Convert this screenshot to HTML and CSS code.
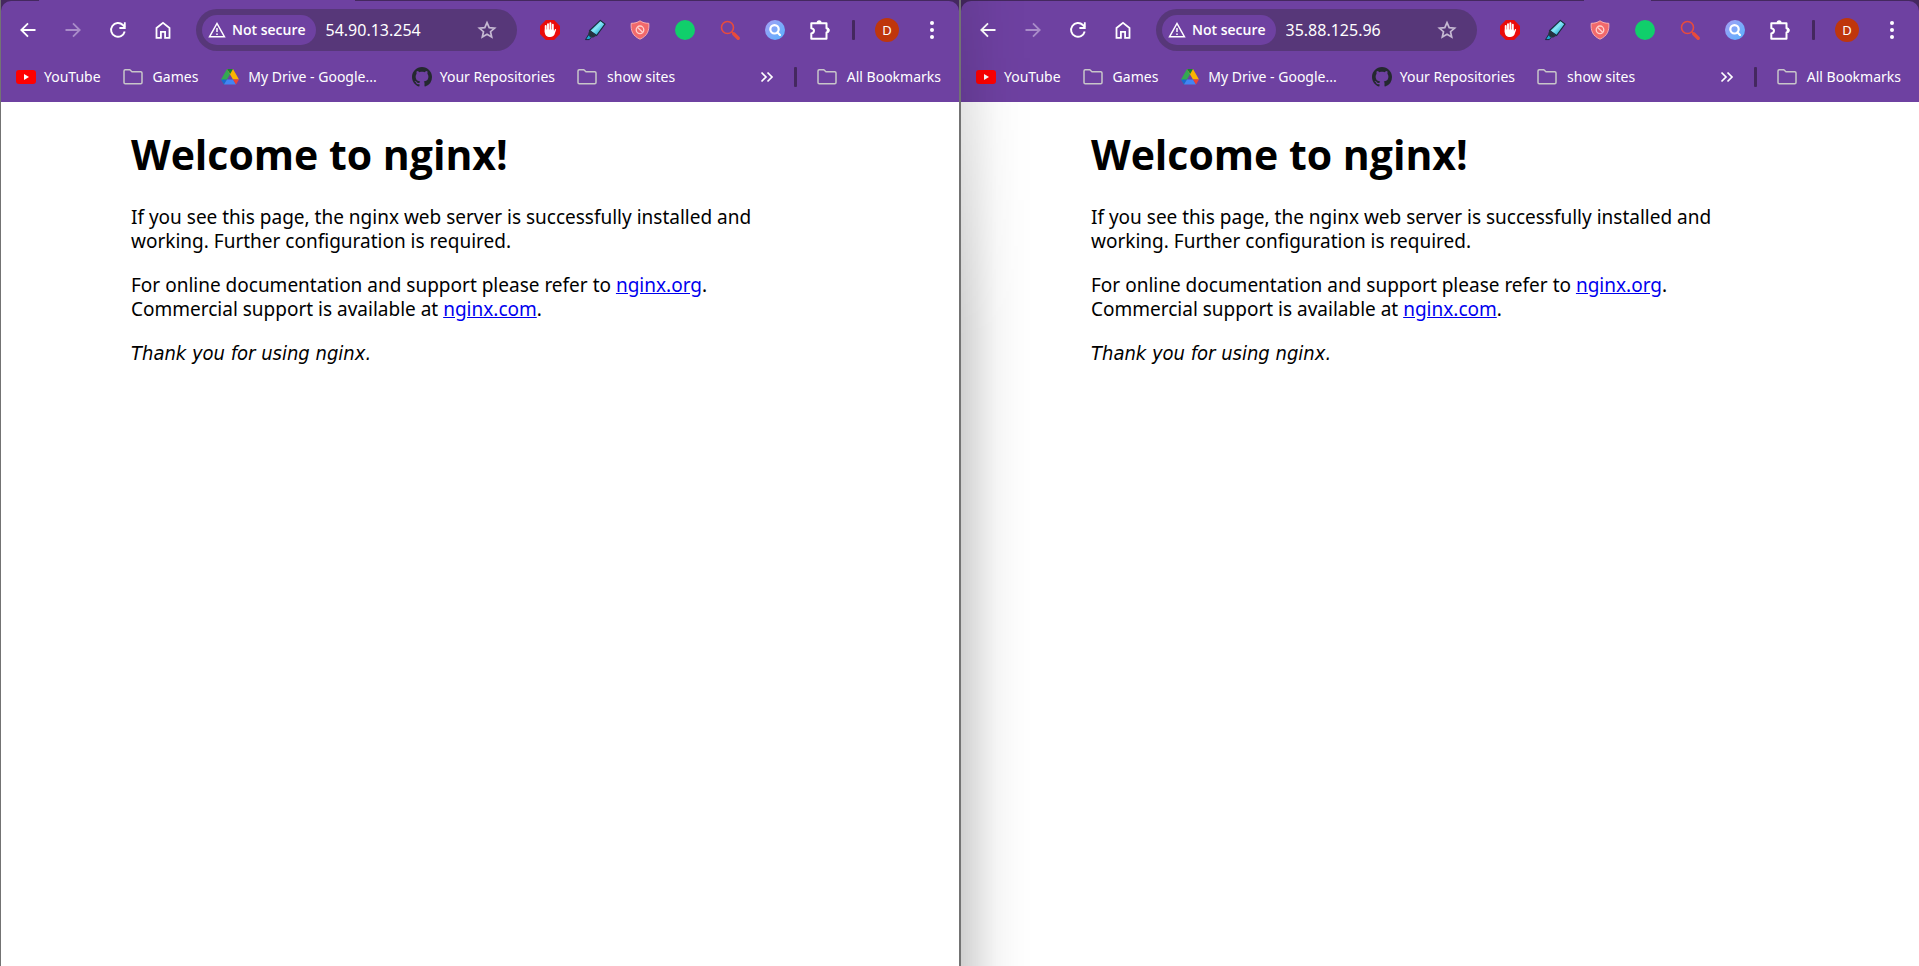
FILE: index.html
```html
<!DOCTYPE html>
<html lang="en">
<head>
<meta charset="utf-8">
<title>Welcome to nginx!</title>
<link rel="stylesheet" href="styles.css">
</head>
<body>
<svg class="sprite" aria-hidden="true">
  <symbol id="back" viewBox="0 0 20 20"><path d="M17.500 10H4M10 3.300 3.300 10l6.700 6.700" fill="none" stroke="currentColor" stroke-width="1.800"/></symbol>
  <symbol id="forward" viewBox="0 0 20 20"><path d="M2.500 10H16M10 3.300l6.700 6.700L10 16.700" fill="none" stroke="currentColor" stroke-width="1.800"/></symbol>
  <symbol id="reload" viewBox="0 0 20 20"><path d="M16.700 11.500A6.900 6.900 0 1 1 14.900 5l2 2" fill="none" stroke="currentColor" stroke-width="1.900"/><path d="M17.700 2.300v6.600h-6.300V7.100h4.500V2.300z" fill="currentColor"/></symbol>
  <symbol id="home" viewBox="0 0 20 20"><path d="M3.500 17.800V8L10 2.800 16.500 8v9.800h-4.400v-6H7.900v6z" fill="none" stroke="currentColor" stroke-width="1.800"/></symbol>
  <symbol id="warning" viewBox="0 0 18 18"><path d="M1.600 15.700 9 2.500l7.400 13.200z" fill="none" stroke="currentColor" stroke-width="1.500"/><path d="M9 7v4M9 12.500v1.500" stroke="currentColor" stroke-width="1.500"/></symbol>
  <symbol id="star" viewBox="0 0 20 20"><path d="m10 2.600 2.200 5 5.400.500-4.100 3.600 1.200 5.300-4.700-2.800L5.300 17l1.200-5.300-4.100-3.600 5.400-.500z" fill="none" stroke="currentColor" stroke-width="1.700"/></symbol>
  <symbol id="stop-hand" viewBox="0 0 20 20"><path d="M5.900 0h8.200L20 5.900v8.200L14.100 20H5.900L0 14.100V5.900z" fill="#ea0b0b"/><path d="M5.700 6v6M8 4.200V11M10.400 3.200V11M12.800 4.800V11" stroke="#fff" stroke-width="1.900" stroke-linecap="round"/><path d="M4.800 9.500h9v2l1-2c.500-.800 1.500-.600 1.300.300l-1.600 4.700c-.800 1.700-2 2.400-4.300 2.400-3.500 0-5.400-2-5.400-5z" fill="#fff"/></symbol>
  <symbol id="marker" viewBox="0 0 22 22"><defs><linearGradient id="ink" x1="0" y1="0" x2="1" y2="1"><stop offset=".2" stop-color="#1597c2"/><stop offset=".45" stop-color="#8ce8f8"/><stop offset=".8" stop-color="#18a5d2"/></linearGradient></defs><path d="M16.300 1.400 21 5 12.600 16.500 5.600 11.500z" fill="url(#ink)" stroke="#182b3a" stroke-width="1.100"/><path d="M5.300 11.500 12.400 16.700 8.800 18.800 4 15.500z" fill="#26323e"/><path d="m4.300 16 3 2.300-2 2.300H1.500z" fill="#1aa7d2" stroke="#182b3a"/></symbol>
  <symbol id="shield" viewBox="0 0 20 20"><path d="M10 .800c2.500 1.700 5.200 2.500 8.800 2.500.600 7.300-1.400 12.600-8.800 15.900C2.600 15.900.600 10.600 1.200 3.300 4.800 3.300 7.500 2.500 10 .800z" fill="#f2696b" stroke="#ffb7b4" stroke-width=".900"/><circle cx="10" cy="9.800" r="3.800" fill="none" stroke="#ffd1cd" stroke-width="1.300"/><path d="m7.400 7.300 5.200 5" stroke="#ffd1cd" stroke-width="1.300"/></symbol>
  <symbol id="green-dot" viewBox="0 0 20 20"><circle cx="10" cy="10" r="10" fill="#10cf6b"/></symbol>
  <symbol id="red-lens" viewBox="0 0 20 20"><circle cx="7.500" cy="7.500" r="6" fill="none" stroke="#e84b3c" stroke-width="1.600"/><path d="m11.700 11.700 2 2" stroke="#e84b3c" stroke-width="1.500"/><path d="m13.700 13.700 4.500 4.500" stroke="#e84b3c" stroke-width="3.400" stroke-linecap="round"/></symbol>
  <symbol id="blue-lens" viewBox="0 0 20 20"><defs><linearGradient id="sky" x1="0" y1="0" x2="1" y2="1"><stop offset="0" stop-color="#a7a0f5"/><stop offset="1" stop-color="#55b2ff"/></linearGradient></defs><circle cx="10" cy="10" r="10" fill="url(#sky)"/><circle cx="9.500" cy="9.300" r="4.200" fill="none" stroke="#fff" stroke-width="2.200"/><path d="m12.600 12.400 2.400 2.500" stroke="#fff" stroke-width="2.200" stroke-linecap="round"/></symbol>
  <symbol id="puzzle" viewBox="0 0 22 22"><path d="M2.300 4.200h15.200v5c2.800.300 2.800 4 0 4.300v6.200H2.300v-5.200c3.600-.700 3.600-4.700 0-5.300z" fill="none" stroke="currentColor" stroke-width="2" stroke-linejoin="round"/><path d="M7.600 4a2.500 2.700 0 0 1 5 0zM17.700 8.800c3.800 0 3.800 5 0 5z" fill="currentColor"/></symbol>
  <symbol id="dots" viewBox="0 0 20 20"><g fill="currentColor"><circle cx="10" cy="2.900" r="2"/><circle cx="10" cy="10" r="2"/><circle cx="10" cy="17" r="2"/></g></symbol>
  <symbol id="youtube" viewBox="0 0 20 20"><rect y="3" width="20" height="14" rx="3" fill="#f00"/><path d="M8 7v6l5-3z" fill="#fff"/></symbol>
  <symbol id="folder" viewBox="0 0 20 20"><path d="M1 4q0-1.200 1.200-1.200h4.600l2.200 2h8.800Q19 4.800 19 6v9.500q0 1.200-1.200 1.200H2.200Q1 16.700 1 15.500z" fill="none" stroke="currentColor" stroke-width="1.500"/></symbol>
  <symbol id="drive" viewBox="0 0 20 20"><path d="M7 2 1 12.500l3 5L10.200 7z" fill="#34a853"/><path d="M7 2h6l6 10.500h-6z" fill="#fbb400"/><path d="M1 12.500h6l-3 5z" fill="#1967d2"/><path d="M7 12.500h6l3 5H4z" fill="#4285f4"/><path d="M13 12.500h6l-3 5z" fill="#ea4335"/><path d="M7 2h6l-2.800 5z" fill="#188038"/></symbol>
  <symbol id="github" viewBox="0 0 16 16"><path fill="#24292f" d="M8 0C3.580 0 0 3.580 0 8c0 3.540 2.290 6.530 5.470 7.590.4.070.55-.17.55-.38 0-.19-.01-.82-.01-1.490-2.010.37-2.530-.49-2.690-.94-.09-.23-.48-.94-.82-1.130-.28-.15-.68-.52-.01-.53.63-.01 1.080.58 1.230.82.72 1.210 1.870.87 2.330.66.070-.52.28-.87.51-1.070-1.780-.2-3.640-.89-3.640-3.950 0-.87.31-1.590.82-2.150-.08-.2-.36-1.020.08-2.120 0 0 .67-.21 2.200.82.64-.18 1.320-.27 2-.27s1.360.09 2 .27c1.530-1.040 2.200-.82 2.200-.82.44 1.100.16 1.920.08 2.120.51.56.82 1.270.82 2.150 0 3.070-1.870 3.750-3.650 3.950.29.25.54.73.54 1.480 0 1.070-.01 1.930-.01 2.200 0 .21.15.46.55.38A8.010 8.010 0 0 0 16 8c0-4.420-3.580-8-8-8z"/></symbol>
  <symbol id="more" viewBox="0 0 14 14"><path d="m1.500 2.500 4.500 4.500-4.500 4.500M7.500 2.500 12 7l-4.500 4.500" fill="none" stroke="currentColor" stroke-width="1.700"/></symbol>
</svg>

<main class="desktop">
  <section class="window" aria-label="Browser window 54.90.13.254">
    <header class="chrome">
      <div class="tab-edge"><span class="tab tab-first"></span></div>
      <div class="chrome-body">
        <div class="toolbar">
          <button class="tool" aria-label="Back"><svg class="icon"><use href="#back"/></svg></button>
          <button class="tool tool-off" aria-label="Forward" disabled><svg class="icon"><use href="#forward"/></svg></button>
          <button class="tool" aria-label="Reload"><svg class="icon"><use href="#reload"/></svg></button>
          <button class="tool" aria-label="Home"><svg class="icon"><use href="#home"/></svg></button>
          <div class="address">
            <button class="chip"><svg class="icon-small"><use href="#warning"/></svg>Not secure</button>
            <input class="url" type="text" aria-label="Address" value="54.90.13.254">
            <button class="favorite" aria-label="Bookmark this page"><svg class="icon"><use href="#star"/></svg></button>
          </div>
          <div class="extensions">
            <button class="tool" aria-label="Ad blocker"><svg class="icon"><use href="#stop-hand"/></svg></button>
            <button class="tool" aria-label="Highlighter"><svg class="icon-large"><use href="#marker"/></svg></button>
            <button class="tool" aria-label="Shield"><svg class="icon"><use href="#shield"/></svg></button>
            <button class="tool" aria-label="Status"><svg class="icon"><use href="#green-dot"/></svg></button>
            <button class="tool" aria-label="Search"><svg class="icon"><use href="#red-lens"/></svg></button>
            <button class="tool" aria-label="Image search"><svg class="icon"><use href="#blue-lens"/></svg></button>
            <button class="tool" aria-label="Extensions"><svg class="icon-large"><use href="#puzzle"/></svg></button>
          </div>
          <span class="divider"></span>
          <button class="tool" aria-label="Profile"><span class="avatar">D</span></button>
          <button class="tool" aria-label="Menu"><svg class="icon"><use href="#dots"/></svg></button>
        </div>
        <nav class="bookmarks" aria-label="Bookmarks">
          <a class="bookmark" href="#"><svg class="icon"><use href="#youtube"/></svg>YouTube</a>
          <a class="bookmark folder" href="#"><svg class="icon"><use href="#folder"/></svg>Games</a>
          <a class="bookmark wide" href="#"><svg class="icon"><use href="#drive"/></svg>My Drive - Google...</a>
          <a class="bookmark" href="#"><svg class="icon"><use href="#github"/></svg>Your Repositories</a>
          <a class="bookmark folder" href="#"><svg class="icon"><use href="#folder"/></svg>show sites</a>
          <div class="bookmarks-end">
            <button aria-label="More bookmarks"><svg class="icon-tiny"><use href="#more"/></svg></button>
            <span class="divider"></span>
            <a class="bookmark folder" href="#"><svg class="icon"><use href="#folder"/></svg>All Bookmarks</a>
          </div>
        </nav>
      </div>
    </header>
    <article class="page">
      <h1>Welcome to nginx!</h1>
      <p>If you see this page, the nginx web server is successfully installed and working. Further configuration is required.</p>
      <p>For online documentation and support please refer to <a href="#">nginx.org</a>.<br>Commercial support is available at <a href="#">nginx.com</a>.</p>
      <p><em>Thank you for using nginx.</em></p>
    </article>
  </section>

  <section class="window window-shaded" aria-label="Browser window 35.88.125.96">
    <header class="chrome">
      <div class="tab-edge"><span class="tab tab-late"></span></div>
      <div class="chrome-body">
        <div class="toolbar">
          <button class="tool" aria-label="Back"><svg class="icon"><use href="#back"/></svg></button>
          <button class="tool tool-off" aria-label="Forward" disabled><svg class="icon"><use href="#forward"/></svg></button>
          <button class="tool" aria-label="Reload"><svg class="icon"><use href="#reload"/></svg></button>
          <button class="tool" aria-label="Home"><svg class="icon"><use href="#home"/></svg></button>
          <div class="address">
            <button class="chip"><svg class="icon-small"><use href="#warning"/></svg>Not secure</button>
            <input class="url" type="text" aria-label="Address" value="35.88.125.96">
            <button class="favorite" aria-label="Bookmark this page"><svg class="icon"><use href="#star"/></svg></button>
          </div>
          <div class="extensions">
            <button class="tool" aria-label="Ad blocker"><svg class="icon"><use href="#stop-hand"/></svg></button>
            <button class="tool" aria-label="Highlighter"><svg class="icon-large"><use href="#marker"/></svg></button>
            <button class="tool" aria-label="Shield"><svg class="icon"><use href="#shield"/></svg></button>
            <button class="tool" aria-label="Status"><svg class="icon"><use href="#green-dot"/></svg></button>
            <button class="tool" aria-label="Search"><svg class="icon"><use href="#red-lens"/></svg></button>
            <button class="tool" aria-label="Image search"><svg class="icon"><use href="#blue-lens"/></svg></button>
            <button class="tool" aria-label="Extensions"><svg class="icon-large"><use href="#puzzle"/></svg></button>
          </div>
          <span class="divider"></span>
          <button class="tool" aria-label="Profile"><span class="avatar">D</span></button>
          <button class="tool" aria-label="Menu"><svg class="icon"><use href="#dots"/></svg></button>
        </div>
        <nav class="bookmarks" aria-label="Bookmarks">
          <a class="bookmark" href="#"><svg class="icon"><use href="#youtube"/></svg>YouTube</a>
          <a class="bookmark folder" href="#"><svg class="icon"><use href="#folder"/></svg>Games</a>
          <a class="bookmark wide" href="#"><svg class="icon"><use href="#drive"/></svg>My Drive - Google...</a>
          <a class="bookmark" href="#"><svg class="icon"><use href="#github"/></svg>Your Repositories</a>
          <a class="bookmark folder" href="#"><svg class="icon"><use href="#folder"/></svg>show sites</a>
          <div class="bookmarks-end">
            <button aria-label="More bookmarks"><svg class="icon-tiny"><use href="#more"/></svg></button>
            <span class="divider"></span>
            <a class="bookmark folder" href="#"><svg class="icon"><use href="#folder"/></svg>All Bookmarks</a>
          </div>
        </nav>
      </div>
    </header>
    <article class="page">
      <h1>Welcome to nginx!</h1>
      <p>If you see this page, the nginx web server is successfully installed and working. Further configuration is required.</p>
      <p>For online documentation and support please refer to <a href="#">nginx.org</a>.<br>Commercial support is available at <a href="#">nginx.com</a>.</p>
      <p><em>Thank you for using nginx.</em></p>
    </article>
  </section>
</main>
</body>
</html>
```
FILE: styles.css
```css
:root {
  --chrome: #6e41a1;
  --chrome-dark: #44285f;
  --field: #573779;
  --edge: #737373;
}

* { box-sizing: border-box; }

body {
  margin: 0;
  overflow: hidden;
  background: #fff;
}

button {
  padding: 0;
  border: 0;
  background: none;
  color: inherit;
  font: inherit;
}

svg {
  display: block;
  flex: none;
}

.sprite {
  position: absolute;
  width: 0;
  height: 0;
}

/* The right-hand border of the last window falls just outside the screen. */
.desktop {
  display: grid;
  grid-template-columns: 1fr 1fr;
  width: calc(100% + 1px);
  min-height: 100vh;
}

.window {
  position: relative;
  min-width: 0;
  border: solid var(--edge);
  border-width: 0 1px;
}

.window-shaded::after {
  content: "";
  position: absolute;
  inset: 0 auto 0 0;
  width: 72px;
  background: linear-gradient(to right, rgb(0 0 0 / 18%), rgb(0 0 0 / 11%) 25%, rgb(0 0 0 / 4%) 50%, rgb(0 0 0 / 1%) 75%, transparent);
  mask-image: linear-gradient(to bottom, rgb(0 0 0 / 40%), rgb(0 0 0 / 60%) 12%, #000 35%);
  pointer-events: none;
}

.chrome {
  background: var(--chrome-dark);
  color: #fff;
  font: 14px/20px "Noto Sans", "Open Sans", sans-serif;
}

.tab-edge {
  display: flex;
  height: 1px;
}

.tab { background: var(--chrome); }
.tab-first { width: 33%; margin-left: 4%; }
.tab-late { width: 7%; margin-left: 65%; }

.chrome-body {
  border-radius: 10px 10px 0 0;
  background: var(--chrome);
}

.toolbar {
  display: flex;
  align-items: center;
  gap: 5px;
  padding: 8px 7px 0;
}

.tool {
  display: flex;
  align-items: center;
  justify-content: center;
  width: 40px;
  height: 40px;
}

.tool-off { color: #a98cc9; }

.icon { width: 20px; height: 20px; }
.icon-large { width: 22px; height: 22px; }
.icon-small { width: 18px; height: 18px; }
.icon-tiny { width: 14px; height: 14px; }

.address {
  display: flex;
  flex: 1;
  align-items: center;
  min-width: 0;
  height: 42px;
  margin: 0 8px;
  padding: 0 20px 0 6px;
  border-radius: 21px;
  background: var(--field);
}

.chip {
  display: flex;
  align-items: center;
  gap: 6px;
  height: 30px;
  padding: 0 10px 0 6px;
  border-radius: 15px;
  background: var(--chrome);
  font: 600 14px/20px "Open Sans", "Noto Sans", sans-serif;
  white-space: nowrap;
}

.url {
  flex: 1;
  min-width: 0;
  padding: 0 0 0 10px;
  border: 0;
  outline: 0;
  background: none;
  color: #fff;
  font: 16px/24px "Noto Sans", "Open Sans", sans-serif;
}

.favorite { color: #c5b9d2; }

.extensions {
  display: flex;
  gap: 5px;
}

.divider {
  flex: none;
  width: 3px;
  height: 20px;
  border-radius: 1px;
  background: var(--chrome-dark);
}

.toolbar .divider { margin: 0 7px; }

.avatar {
  width: 24px;
  height: 24px;
  border-radius: 50%;
  background: #bf360c;
  font-size: 13px;
  line-height: 24px;
  text-align: center;
}

.bookmarks {
  display: flex;
  align-items: center;
  gap: 22px;
  height: 51px;
  padding: 0 18px 0 15px;
}

.bookmarks-end {
  display: flex;
  align-items: center;
  gap: 20px;
  margin-left: auto;
}

.bookmark {
  display: flex;
  align-items: center;
  gap: 8px;
  color: #fff;
  text-decoration: none;
  white-space: nowrap;
}

.folder { gap: 10px; }
.folder .icon { color: #c8c6c9; }
.wide { padding-right: 13px; }

.page {
  max-width: 698px;
  margin: 0 auto;
  color: #000;
  font: 19px/24px "Noto Sans", "Open Sans", sans-serif;
}

.page h1 {
  margin: 28px 0 27px;
  font: 700 41px/48px "Open Sans", "Noto Sans", sans-serif;
}

.page p { margin: 0 0 20px; }

.page em { font: oblique 20px/24px "DejaVu Sans Condensed", "Noto Sans", sans-serif; }

.page a { color: #00e; }
```
